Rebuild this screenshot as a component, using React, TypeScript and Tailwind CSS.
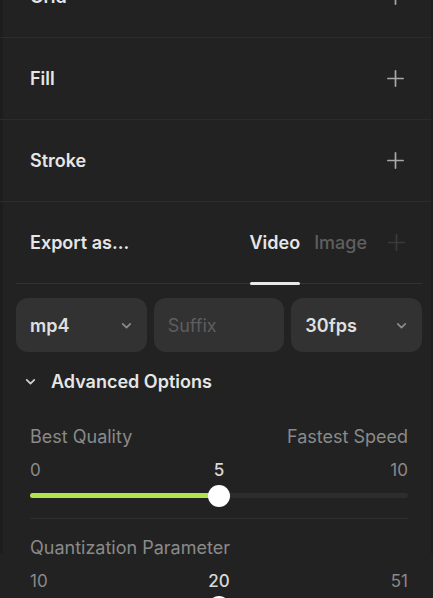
import React from "react";

function Plus({ className }: { className?: string }) {
  return (
    <svg viewBox="0 0 20 20" className={className} fill="none" stroke="currentColor" strokeWidth={1.8} strokeLinecap="round">
      <path d="M10 2v16M2 10h16" />
    </svg>
  );
}

function Chevron({ className }: { className?: string }) {
  return (
    <svg viewBox="0 0 12 12" className={className} fill="none" stroke="currentColor" strokeWidth={1.6} strokeLinecap="round" strokeLinejoin="round">
      <path d="M2.5 4.5 6 8l3.5-3.5" />
    </svg>
  );
}

function SectionRow({ label }: { label: string }) {
  return (
    <div className="flex h-[82px] items-center justify-between border-b border-[#2c2c2c] pl-[30px] pr-[26px]">
      <span className="text-[18px] font-semibold text-[#e6e6e6]">{label}</span>
      <Plus className="h-[19px] w-[19px] text-[#a8a8a8]" />
    </div>
  );
}

function Slider({
  title,
  right,
  min,
  mid,
  max,
  pct,
  fill,
}: {
  title: string;
  right?: string;
  min: string;
  mid: string;
  max: string;
  pct: number;
  fill: boolean;
}) {
  return (
    <div className="flex flex-col">
      <div className="flex h-[24px] items-center justify-between text-[18px] text-[#8a8a8a]">
        <span>{title}</span>
        {right ? <span>{right}</span> : null}
      </div>
      <div className="relative mt-[10px] h-[24px] text-[17px] leading-[24px]">
        <span className="absolute left-0 top-0 text-[#8a8a8a]">{min}</span>
        <span className="absolute top-0 -translate-x-1/2 font-medium text-[#d8d8d8]" style={{ left: `${pct}%` }}>
          {mid}
        </span>
        <span className="absolute right-0 top-0 text-[#8a8a8a]">{max}</span>
      </div>
      <div className="relative mt-[11px] h-[5px] rounded-full bg-[#2d2d2d]">
        {fill ? (
          <div className="absolute left-0 top-0 h-full rounded-full bg-[#b2e24c]" style={{ width: `${pct}%` }} />
        ) : null}
        <div
          className="absolute top-1/2 h-[22px] w-[22px] -translate-x-1/2 -translate-y-1/2 rounded-full bg-white"
          style={{ left: `${pct}%` }}
        />
      </div>
    </div>
  );
}

export default function App() {
  return (
    <div className="h-[598px] w-[433px] overflow-hidden bg-[#222222] font-['Inter',sans-serif] antialiased">
      <div className="h-full border-l-[3px] border-r-[2px] border-l-[#1d1d1d] border-r-[#1d1d1d]">
        <div className="-ml-[3px] -mt-[44px]">
          <SectionRow label="Grid" />
          <SectionRow label="Fill" />
          <SectionRow label="Stroke" />
        </div>

        <div className="-ml-[3px] pl-[16px] pr-[9px]">
          <div className="flex h-[82px] items-stretch justify-between border-b border-[#333333]">
            <div className="flex items-center pl-[14px] text-[18px] font-semibold text-[#e6e6e6]">Export as...</div>
            <div className="flex items-stretch text-[18px] font-semibold">
              <div className="relative flex items-center text-[#e6e6e6]">
                Video
                <span className="absolute bottom-[-2px] left-0 right-0 h-[3px] rounded-full bg-[#e8e8e8]" />
              </div>
              <div className="ml-[14px] flex items-center font-medium text-[#5f5f5f]">Image</div>
              <div className="ml-[20px] mr-[16px] flex items-center">
                <Plus className="h-[19px] w-[19px] text-[#3b3b3b]" />
              </div>
            </div>
          </div>

          <div className="mt-[14px] grid grid-cols-3 gap-[7px]">
            <div className="flex h-[54px] items-center justify-between rounded-[12px] bg-[#323232] pl-[14px] pr-[14px]">
              <span className="text-[18px] font-semibold text-[#e0e0e0]">mp4</span>
              <Chevron className="h-[13px] w-[13px] text-[#8a8a8a]" />
            </div>
            <div className="flex h-[54px] items-center rounded-[12px] bg-[#323232] pl-[14px]">
              <span className="text-[18px] text-[#5e5e5e]">Suffix</span>
            </div>
            <div className="flex h-[54px] items-center justify-between rounded-[12px] bg-[#323232] pl-[14px] pr-[14px]">
              <span className="text-[18px] font-semibold text-[#e0e0e0]">30fps</span>
              <Chevron className="h-[13px] w-[13px] text-[#8a8a8a]" />
            </div>
          </div>

          <div className="mt-[17px] flex h-[24px] items-center pl-[8px]">
            <Chevron className="h-[13px] w-[13px] text-[#cfcfcf]" />
            <span className="ml-[14px] text-[18px] font-semibold text-[#e6e6e6]">Advanced Options</span>
          </div>
        </div>

        <div className="-ml-[3px] mt-[31px] pl-[30px] pr-[23px]">
          <Slider title="Best Quality" right="Fastest Speed" min="0" mid="5" max="10" pct={50} fill />
          <div className="mt-[20px] h-px bg-[#2e2e2e]" />
          <div className="mt-[16px]">
            <Slider title="Quantization Parameter" min="10" mid="20" max="51" pct={50} fill={false} />
          </div>
        </div>
      </div>
    </div>
  );
}
